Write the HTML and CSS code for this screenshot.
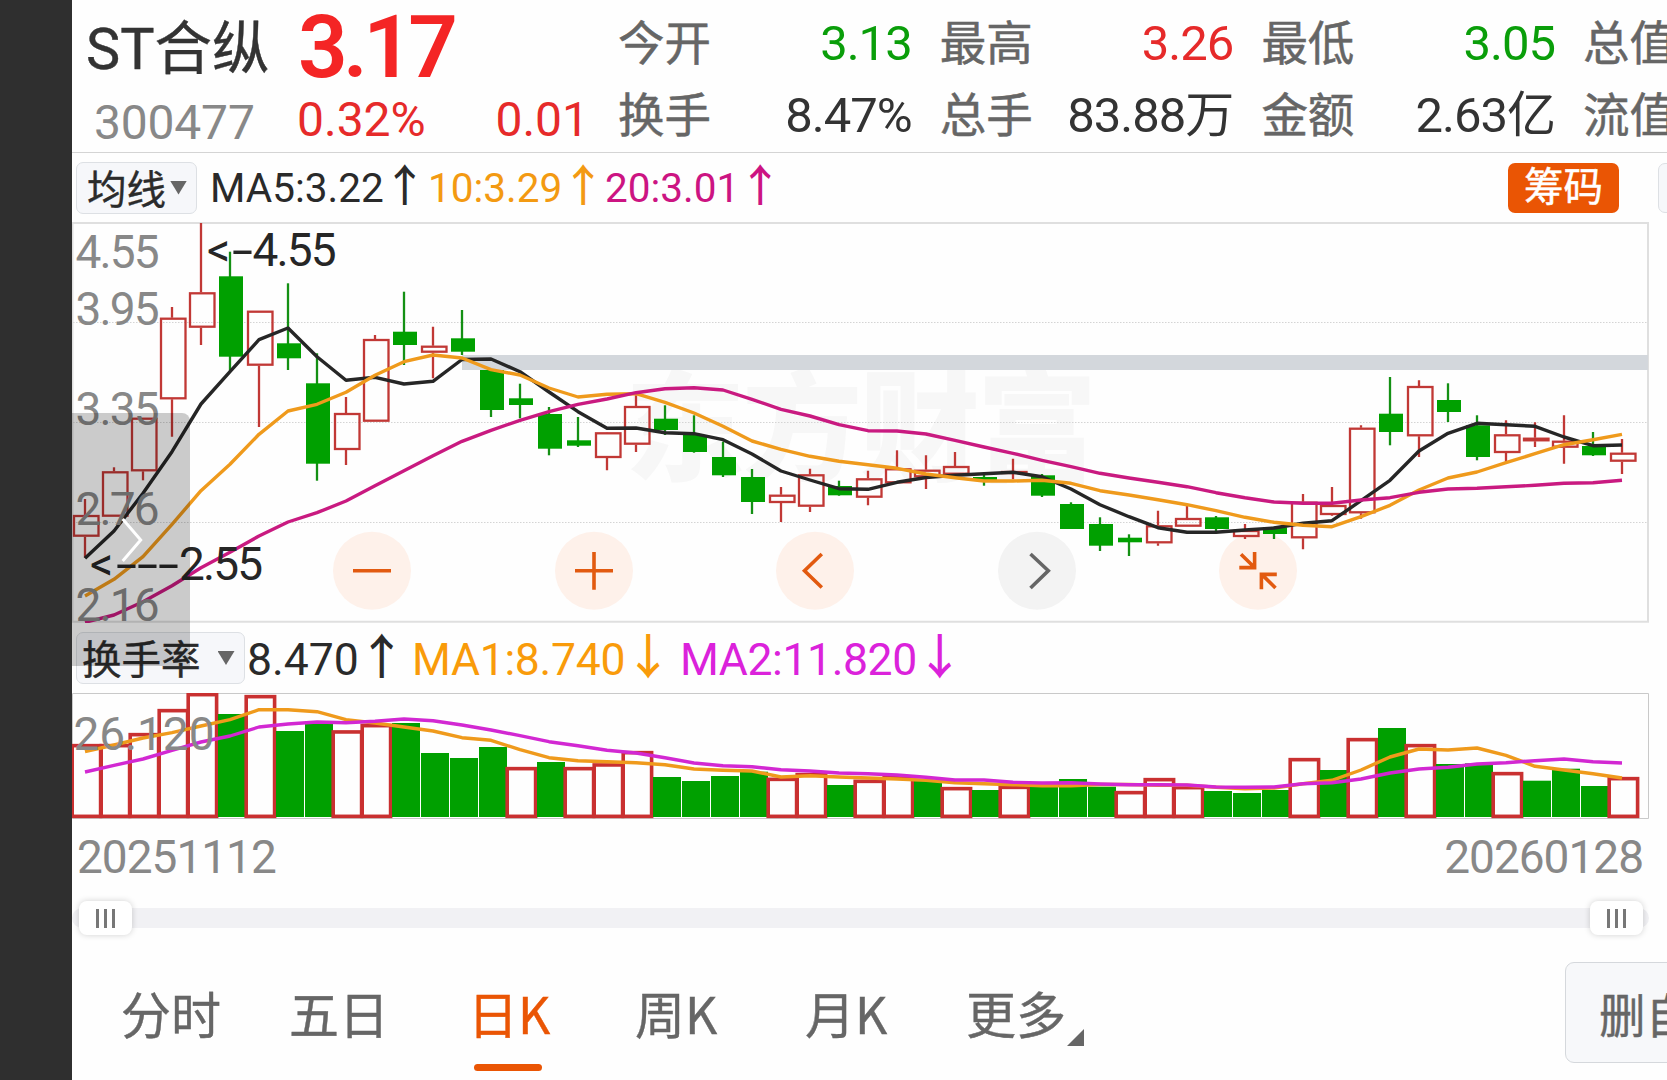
FILE: index.html
```html
<!DOCTYPE html>
<html lang="zh-CN">
<head>
<meta charset="utf-8">
<title>ST合纵 300477</title>
<link rel="stylesheet" href="styles.css">
</head>
<body>
<aside class="edge"></aside>
<main class="panel">
  <header class="quote">
    <div class="identity">
      <div class="name">ST合纵</div>
      <div class="code">300477</div>
    </div>
    <div class="last">
      <div class="price">3.17</div>
      <div class="change"><span>0.32%</span><span>0.01</span></div>
    </div>
    <dl class="stats">
      <div class="stat"><dt>今开</dt><dd class="down">3.13</dd></div>
      <div class="stat"><dt>最高</dt><dd class="up">3.26</dd></div>
      <div class="stat"><dt>最低</dt><dd class="down">3.05</dd></div>
      <div class="stat"><dt>总值</dt><dd></dd></div>
      <div class="stat"><dt>换手</dt><dd class="pct">8.47%</dd></div>
      <div class="stat"><dt>总手</dt><dd>83.88万</dd></div>
      <div class="stat"><dt>金额</dt><dd>2.63亿</dd></div>
      <div class="stat"><dt>流值</dt><dd></dd></div>
    </dl>
  </header>

  <div class="legend legend-price">
    <button class="pick"><span>均线</span><i class="caret"></i></button>
    <span class="ma ma5">MA5:3.22<b class="arrow">↑</b></span>
    <span class="ma ma10">10:3.29<b class="arrow">↑</b></span>
    <span class="ma ma20">20:3.01<b class="arrow">↑</b></span>
    <button class="chips">筹码</button>
    <button class="pick cut"></button>
  </div>

  <section class="chart">
    <svg id="kline" width="1595" height="401" viewBox="72 222 1595 401">
      <text class="watermark" x="625" y="472" textLength="472">东方财富</text>
      <g class="grid">
        <path d="M73 322.5H1648M73 422.5H1648M73 522.5H1648"/>
      </g>
      <path class="frame" d="M72.5 223H1648V621.8H72.5Z"/>
      <rect class="gap-band" x="462" y="355" width="1186" height="15"/>
      <g class="tool">
        <circle cx="372" cy="570.7" r="39"/>
        <path d="M353 570.7H391"/>
      </g>
      <g class="tool">
        <circle cx="594" cy="570.7" r="39"/>
        <path d="M575 570.7H613M594 552V589.7"/>
      </g>
      <g class="tool">
        <circle cx="815" cy="570.7" r="39"/>
        <path d="M821.8 554L804.5 570.7L821.8 587.5"/>
      </g>
      <g class="tool muted">
        <circle cx="1037" cy="570.7" r="39"/>
        <path d="M1030.5 554L1048.3 570.7L1030.5 588"/>
      </g>
      <g class="tool">
        <circle cx="1258" cy="570.7" r="39"/>
        <path d="M1241 554.3L1254 567M1254.6 552V567.6H1239.3M1275.5 588L1262 574.6M1261.4 589.3V574.4H1276.8"/>
      </g>
      <g id="candles"></g>
      <g id="averages"></g>
      <g class="axis">
        <text x="75.5" y="267.5" textLength="84">4.55</text>
        <text x="75.5" y="324.5" textLength="84">3.95</text>
        <text x="75.5" y="424.5" textLength="84">3.35</text>
        <text x="75.5" y="524.5" textLength="84">2.76</text>
        <text x="75.5" y="620.5" textLength="84">2.16</text>
      </g>
      <g class="mark">
        <text y="265.5"><tspan x="207">&lt;</tspan><tspan x="232" textLength="21" lengthAdjust="spacingAndGlyphs">-</tspan><tspan x="252.5" textLength="84">4.55</tspan></text>
        <text y="579.5"><tspan x="90">&lt;</tspan><tspan x="116" textLength="63" lengthAdjust="spacingAndGlyphs">---</tspan><tspan x="179" textLength="84">2.55</tspan></text>
      </g>
    </svg>
  </section>

  <div class="legend legend-turnover">
    <button class="pick wide"><span>换手率</span><i class="caret"></i></button>
    <span class="ma ma5">8.470<b class="arrow">↑</b></span>
    <span class="ma tr1">MA1:8.740<b class="arrow">↓</b></span>
    <span class="ma tr2">MA2:11.820<b class="arrow">↓</b></span>
  </div>

  <section class="chart">
    <svg id="turnover" width="1595" height="127" viewBox="72 693 1595 127">
      <path class="frame thin" d="M72.5 693.5H1648.5V818.5H72.5Z"/>
      <g id="bars"></g>
      <g id="bar-averages"></g>
      <g class="axis"><text x="73.5" y="750" textLength="141">26.120</text></g>
    </svg>
  </section>

  <div class="dates"><span>20251112</span><span>20260128</span></div>

  <div class="range">
    <div class="handle"><i></i><i></i><i></i></div>
    <div class="handle"><i></i><i></i><i></i></div>
  </div>

  <nav class="tabs">
    <a class="tab t-min">分时</a>
    <a class="tab t-five">五日</a>
    <a class="tab t-day active">日K</a>
    <a class="tab t-week">周K</a>
    <a class="tab t-month">月K</a>
    <a class="tab t-more">更多<i class="corner"></i></a>
    <button class="remove">删自选</button>
  </nav>

  <div class="drawer">
    <svg width="118" height="253" viewBox="72 413 118 253"><path d="M122.7 519L140.7 540L122.7 561"/></svg>
  </div>
</main>
<script src="chart.js"></script>
</body>
</html>
```
FILE: styles.css
```css
* { box-sizing: border-box; }

body {
  margin: 0;
  width: 1667px;
  height: 1080px;
  overflow: hidden;
  display: flex;
  background: #fefefe;
  color: #2b2b2b;
  font-family: Roboto, "Noto Sans CJK SC", sans-serif;
}

button {
  font: inherit;
  color: inherit;
  padding: 0;
  white-space: nowrap;
}

.edge { flex: none; width: 72px; background: #2f2f2f; }

.panel {
  position: relative;
  flex: none;
  width: 1595px;
  overflow: hidden;
  display: flex;
  flex-direction: column;
}

/* quote header */
.quote {
  flex: none;
  height: 153px;
  display: flex;
  border-bottom: 1px solid #d4d4d4;
  overflow: hidden;
  white-space: nowrap;
}
.identity { flex: none; width: 226px; padding-left: 14px; }
.name { font-size: 57.5px; line-height: 100px; color: #333; -webkit-text-stroke: .4px; }
.code { font-size: 48px; line-height: 46px; padding-left: 8px; letter-spacing: -0.2px; color: #888; }
.last { flex: none; width: 320px; }
.price {
  font-size: 87px;
  line-height: 94px;
  font-weight: 600;
  letter-spacing: -4.6px;
  color: #f42525;
}
.change {
  display: flex;
  justify-content: space-between;
  width: 292px;
  margin-left: -1px;
  font-size: 48px;
  line-height: 51px;
  color: #e62a2a;
}
.stats {
  flex: none;
  margin: 0;
  display: grid;
  grid-template-columns: repeat(4, 321.7px);
  grid-template-rows: 88px 56px;
  font-size: 49px;
}
.stat { display: flex; justify-content: space-between; padding-right: 28px; line-height: 88px; }
.stat:nth-child(n+5) { line-height: 56px; }
.stat dt { font-size: 46.5px; color: #666; -webkit-text-stroke: .5px; }
.stat dd { margin: 0; letter-spacing: -1px; color: #333; }
.stat .up { color: #e62a2a; }
.stat .down { color: #0a9e0a; }

/* indicator legends */
.legend {
  flex: none;
  display: flex;
  align-items: center;
  white-space: nowrap;
  overflow: hidden;
}
.legend-price { height: 69px; padding: 0 0 0 4px; font-size: 40.5px; }
.legend-turnover { height: 70px; padding-left: 4px; font-size: 44.5px; }
.pick {
  flex: none;
  display: flex;
  align-items: center;
  width: 121px;
  height: 52px;
  padding-left: 10px;
  gap: 4px;
  border: 1px solid #dde0e4;
  border-radius: 7px;
  background: #f6f7fa;
  font-size: 39.5px;
}
.pick span { margin-top: -3px; -webkit-text-stroke: .4px; }
.pick.wide { width: 169px; padding-left: 5px; gap: 17px; margin-right: 2px; }
.pick.cut { width: 20px; height: 50px; margin: 0 -11px 0 39px; }
.caret {
  width: 17px;
  height: 14px;
  background: #666;
  clip-path: polygon(0 0, 100% 0, 50% 100%);
}
.ma { flex: none; display: flex; align-items: center; }
.arrow {
  width: 22px;
  height: 50px;
  line-height: 50px;
  font-weight: 500;
  font-size: 44px;
  letter-spacing: 0;
  display: flex;
  justify-content: center;
  margin-top: -3px;
}
.legend-price .arrow { margin-left: 10px; }
.legend-turnover .arrow { margin-left: 12px; font-size: 48px; }
.ma5 { color: #2a2a2a; }
.ma10 { color: #f39a12; }
.ma20 { color: #cc1482; }
.tr1 { color: #f99b0a; }
.tr2 { color: #db22db; }
.legend-price .ma { padding-top: 1px; }
.legend-price .ma5 { width: 218px; margin-left: 13px; }
.legend-price .ma10 { width: 177px; }
.legend-price .ma20 { width: 170px; }
.legend-turnover .ma { padding-top: 3px; }
.legend-turnover .ma5 { width: 165px; }
.legend-turnover .tr1 { width: 268px; letter-spacing: -0.3px; }
.legend-turnover .tr2 { letter-spacing: -0.4px; }
.chips {
  flex: none;
  margin-left: auto;
  width: 111px;
  height: 50px;
  border: 0;
  border-radius: 7px;
  background: #ea5504;
  color: #fff;
  font-size: 39.5px;
  line-height: 49px;
  -webkit-text-stroke: .5px;
}

/* charts */
.chart { flex: none; display: flex; }
.chart svg { display: block; }
.watermark { font: 900 120px "Noto Sans CJK SC", sans-serif; fill: #f7f7f7; }
.grid path { fill: none; stroke: #d4d4d4; stroke-width: 1; stroke-dasharray: 1.5 1.5; }
.frame { fill: none; stroke: #dfdfdf; stroke-width: 2; }
.frame.thin { stroke: #c9c9c9; stroke-width: 1; }
.gap-band { fill: #d3d7dc; }
.axis text { font-size: 46px; fill: #888; }
.mark text { font-size: 46px; fill: #262626; }
.tool circle { fill: #fef1ea; }
.tool path { fill: none; stroke: #e25a10; stroke-width: 3.6; }
.tool.muted circle { fill: #f3f3f3; }
.tool.muted path { stroke: #666; }
.rise { fill: none; stroke: #c13835; stroke-width: 2.3; }
.fall { fill: #00a000; }
.fall-wick { stroke: #149014; stroke-width: 2.3; }
.bar-rise { fill: none; stroke: #c93030; stroke-width: 3.6; }
.line { fill: none; stroke-width: 3.4; stroke-linejoin: round; }
.line-dark { stroke: #262626; }
.line-orange { stroke: #ef9a1c; }
.line-magenta { stroke: #c91a80; }
.line-violet { stroke: #d228d2; }

/* dates and range slider */
.dates {
  flex: none;
  height: 88px;
  display: flex;
  justify-content: space-between;
  padding: 0 24px 0 5px;
  font-size: 46px;
  line-height: 74px;
  letter-spacing: -1px;
  color: #888;
}
.range {
  flex: none;
  height: 20px;
  width: 1577px;
  padding: 0 6px 0 7px;
  display: flex;
  justify-content: space-between;
  align-items: center;
  border-radius: 10px;
  background: #f1f1f4;
}
.handle {
  width: 53px;
  height: 34px;
  display: flex;
  justify-content: center;
  align-items: center;
  gap: 5.5px;
  border-radius: 8px;
  background: #fff;
  box-shadow: 0 0 6px rgba(0, 0, 0, .18);
}
.handle i { width: 2.5px; height: 19px; background: #777; }

/* period tabs */
.tabs {
  flex: 1;
  display: flex;
  align-items: flex-start;
  padding: 34px 0 0 49px;
  font-family: "Noto Sans CJK SC", sans-serif;
  font-size: 50px;
  color: #666;
  -webkit-text-stroke: .4px;
}
.tab {
  flex: none;
  display: flex;
  align-items: flex-end;
  height: 104px;
  line-height: 108px;
}
.t-min { width: 168px; }
.t-five { width: 179px; }
.t-day { width: 167px; }
.t-week { width: 170px; }
.t-month { width: 161px; }
.active { color: #ea5504; flex-wrap: wrap; line-height: 100px; }
.active::after {
  content: "";
  width: 68px;
  height: 7px;
  margin: 2px 40px 0 6px;
  border-radius: 4px;
  background: #ea5504;
}
.corner {
  width: 17px;
  height: 17px;
  margin: 0 0 20px 1px;
  background: #666;
  clip-path: polygon(100% 0, 100% 100%, 0 100%);
}
.remove {
  flex: none;
  margin-left: auto;
  width: 200px;
  height: 101px;
  margin-right: -98px;
  padding-left: 33px;
  text-align: left;
  border: 1px solid #d5d8dc;
  border-radius: 9px;
  background: #f7f8fa;
  font-size: 46.5px;
}

/* translucent pull-out handle over the chart's left edge */
.drawer {
  position: absolute;
  left: 0;
  top: 413px;
  width: 118px;
  height: 253px;
  border-radius: 0 8px 0 0;
  background: rgba(0, 0, 0, .2);
}
.drawer path { fill: none; stroke: #fff; stroke-width: 3; }
```
FILE: chart.js
```js
// Session i is centred on x = 85 + 29 * i.
const X0 = 85, STEP = 29;

// [rising, high, body top, body bottom, low]
const candles = [
  [1,499,515,536.7,557.7],[1,467.3,471.3,516.7,516.7],[1,417.7,417.7,471.3,480.3],[1,307,317.7,399.3,436.7],
  [1,223,292.3,327.7,345],[0,251.7,276.3,356.7,370.7],[1,310.7,310.7,365.7,427],[0,283.3,343.3,358.3,370],
  [0,353.3,383.3,463.7,480.7],[1,397,413,450,465],[1,335,339,421.7,421.7],[0,291.7,331.7,345,365],
  [1,326.7,345.7,352.7,378.3],[0,310,338.3,351.7,355],[0,370,370,410,417],[0,383.7,398.3,405,418.3],
  [0,407,414,448.7,455.3],[0,417,440.3,445.7,447],[1,432,432.3,458,470.3],[1,395.3,406,444.7,452],
  [0,405.3,418.7,430,435],[0,415.3,435,452,452.7],[0,441.7,457,475.3,477],[0,469,477,502,514],
  [1,487,494.7,503,522],[1,468.7,474.3,506.7,512],[0,480.7,486,495.3,495.7],[1,470.7,478.3,497.7,505.3],
  [1,450.3,468.3,483.3,483.3],[1,455.3,469.7,477.3,489],[1,452,466,474.7,474.7],[0,474.3,477,480,485.7],
  [1,458.7,471,473,479.3],[0,474,475.3,495.7,497],[0,502.3,504,529,529],[0,517.3,524,545.7,551],
  [0,534.3,537.7,542.3,556],[1,510.7,525.3,543.3,545.7],[1,505.7,518,526.7,526.7],[0,516,517.3,529,531],
  [1,524,530,537,539],[0,526.7,527.3,534,539],[1,494,501.7,538.3,549.3],[1,487,505,515,515.7],
  [1,425.3,427.7,513.3,518.7],[0,377,413.7,432,445.3],[1,380.3,386,436.3,457],[0,383.3,400,412,422],
  [0,415.3,425.3,457,460.3],[1,420.3,434.3,453,462],[1,422.3,437.7,441.3,447],[1,415.3,440.7,447.7,463.7],
  [0,432,446,455.3,456],[1,439,452.7,461.7,474]
];

const ma5 = [558.3,531,493.3,451.7,404,371.7,339.7,328,356.7,380.3,377.3,384,381.3,359.5,359,371.7,392,411.7,
  428.3,428,432.7,433.7,439.7,454,471,480,488.7,489.3,482.3,477.5,475.3,473.7,472.3,476.7,489,504.7,516.7,
  527.7,532.3,532.3,530,528,523.3,520.7,500.7,480.3,451,433.3,423.3,424.7,426.3,437,445.7,445];
const ma10 = [596,579.3,556.7,524.3,490.7,464.3,434.3,411,404.3,392.3,375.3,361.7,355,358,369.7,375,388,397,
  394.3,393.7,402.3,413,426.3,441,449.3,456.3,461.3,464.7,468.3,474,477.7,481,481,480.3,483.3,490.7,495,
  499.7,504.7,510.7,517.3,522.3,525.3,526.7,516.7,505.3,490,478,472,462.7,453.7,444.7,439.7,434.3];
const ma20 = [622.3,615,601.7,585.7,567.7,552.3,536,522,512.7,501,485.7,470.7,455.7,441.3,430.3,420.3,411.7,
  404.3,399,392.7,388.7,387.7,390,399.3,409.3,416,424.7,430.7,431,434,440.3,447,453.3,460.3,466.7,473.3,478,
  482.3,486.7,492.7,497.7,502,503.3,503.3,500,497.7,492.3,489,488.3,486.7,485.3,483.3,482.7,480.3];

// [rising, bar top]
const bars = [
  [1,744],[1,744],[1,733],[1,709],[1,693],[0,714],[1,695],[0,731],[0,723.3],[1,730.3],[1,724],[0,723],
  [0,753],[0,758],[0,747],[1,767],[0,762],[1,767],[1,763.3],[1,751],[0,777],[0,781],[0,776],[0,771.7],
  [1,777.7],[1,773],[0,785],[1,779.7],[1,776],[0,780.7],[1,787],[0,790],[1,785.7],[0,786.7],[0,779],
  [0,786.7],[1,791],[1,778],[1,786],[0,791],[0,793],[0,790],[1,758],[0,770],[1,738],[0,728],[1,744],
  [0,764],[0,763.3],[1,772],[0,780.7],[0,768.7],[0,786],[1,777]
];
const tr1 = [751.7,745,738,732.7,726,719.7,709.7,709.7,711.7,719.7,723,727,731,737.7,740.3,749.7,757.7,760.7,
  761.7,762.7,764.7,769,770.3,771,777,775.7,777,778,779,780.3,782.7,783.7,784.7,785.7,785.7,784.5,784.5,
  785.3,785.3,787.3,788.7,788,783.7,780.3,770,757,749,750,748,755.3,766.3,770,773.7,778];
const tr2 = [772,765.3,759,750.3,742,736,727,724,722,722.7,721.3,719,720.7,725,730,735.7,741.7,745.7,750.3,
  753,757.7,763,765.7,766.7,769.7,771,773,773.7,775,777.3,780,780,782.3,783,782.7,784,784.7,784.7,785,787,
  787.3,787,783.7,782.7,779,773,769,767.3,764,762.7,760.7,759,761.7,763];

const line = (values, cls) =>
  `<polyline class="line ${cls}" points="${values.map((y, i) => `${X0 + STEP * i},${y}`).join(' ')}"/>`;

document.getElementById('candles').innerHTML = candles.map(([up, hi, top, bottom, lo], i) => {
  const x = X0 + STEP * i;
  if (up) {
    return `<path class="rise" d="M${x} ${hi}V${top}M${x} ${bottom}V${lo}"/>` +
      `<rect class="rise" x="${x - 11}" y="${top + 1}" width="24.5" height="${Math.max(bottom - top - 2, 1)}"/>`;
  }
  return `<path class="fall-wick" d="M${x} ${hi}V${lo}"/>` +
    `<rect class="fall" x="${x - 11}" y="${top}" width="24" height="${bottom - top}"/>`;
}).join('');

document.getElementById('averages').innerHTML =
  line(ma5, 'line-dark') + line(ma10, 'line-orange') + line(ma20, 'line-magenta');

document.getElementById('bars').innerHTML = bars.map(([up, top], i) => {
  const x = X0 + STEP * i;
  return up
    ? `<rect class="bar-rise" x="${x - 12.8}" y="${top + 1.65}" width="28.4" height="${818 - top - 3.3}"/>`
    : `<rect class="fall" x="${x - 12}" y="${top}" width="28" height="${817 - top}"/>`;
}).join('');

document.getElementById('bar-averages').innerHTML = line(tr1, 'line-orange') + line(tr2, 'line-violet');
```
